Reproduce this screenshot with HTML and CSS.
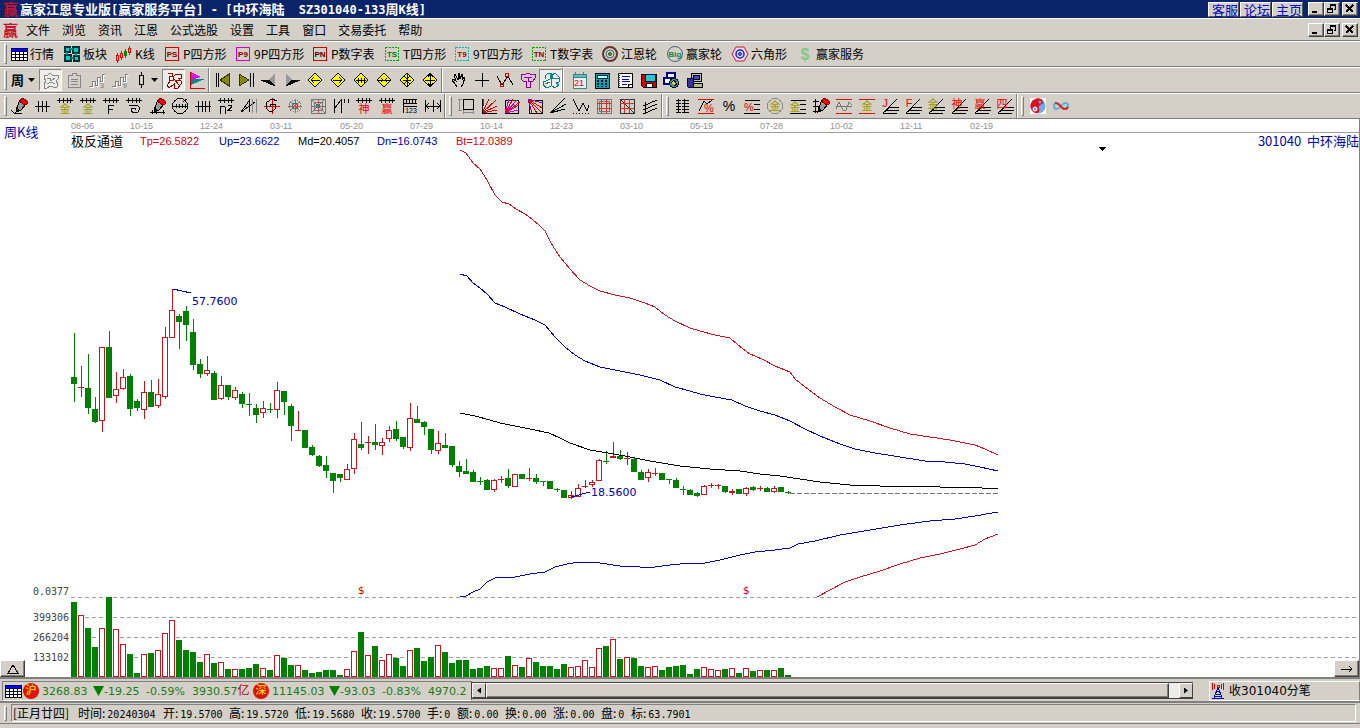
FILE: index.html
```html
<!DOCTYPE html>
<html lang="zh-CN">
<head>
<meta charset="utf-8">
<title>赢家江恩专业版</title>
<link rel="stylesheet" href="styles.css">
</head>
<body>
<svg class="defs" aria-hidden="true">
  <symbol id="comb" viewBox="0 0 18 18"><path d="M1 3.500h16M3.500 1v5M7.500 1v5M11.500 1v5M14.500 1v5"/></symbol>
  <symbol id="diamond" viewBox="0 0 18 18"><path d="M9 2l7 7-7 7-7-7z" fill="#ff0" stroke="#000"/></symbol>
  <symbol id="fan" viewBox="0 0 18 18"><path d="M2 16L16 2M2 16l7-6h9M2 16l4-3h12M2 16.500h14"/></symbol>
  <symbol id="pen" viewBox="0 0 18 18"><path d="M7 10l3-7 6 4-5 6-5 2z" fill="#999"/><path d="M11 2l2-1 4 3v3l-2 1-5-3z" fill="#e00" stroke="#800"/><path d="M8 10l-2 5 3-1" fill="#000"/></symbol>
  <symbol id="wave" viewBox="0 0 18 18"><path d="M1 15.500h3v-5h3v4h2v-8h3v4h2v-7h3" stroke="#fff" transform="translate(1 1)"/><path d="M1 15.500h3v-5h3v4h2v-8h3v4h2v-7h3" stroke="#808080"/></symbol>
  <symbol id="table" viewBox="0 0 18 18"><path d="M1 3h16v12H1z" fill="#fff" stroke="#000"/><path d="M1 3h16v3H1z" fill="#00f" stroke="#006"/><path d="M1 9h16M1 12h16M5 6v9M9 6v9M13 6v9" stroke="#000"/></symbol>
  <symbol id="restore" viewBox="0 0 12 12"><path d="M4 1h6v2H4zM1 5h6v2H1z" fill="#000" stroke="none"/><path d="M4.500 5V1.500h5v5H8M1.500 5.500h5v4h-5z"/></symbol>
</svg>

<header class="titlebar">
  <span class="logo">赢</span>
  <h1>赢家江恩专业版<span>[</span>赢家服务平台<span>] - [</span>中环海陆<span>  SZ301040-133</span>周<span>K</span>线<span>]</span></h1>
  <nav class="links"><a href="#">客服</a><a href="#">论坛</a><a href="#">主页</a></nav>
  <div class="winbtns">
    <button aria-label="最小化"><svg viewBox="0 0 12 12"><path d="M2 9h5" stroke-width="2"/></svg></button>
    <button aria-label="还原"><svg><use href="#restore"/></svg></button>
    <button class="close" aria-label="关闭"><svg viewBox="0 0 12 12"><path d="M2 2l7 7M9 2l-7 7" stroke-width="2"/></svg></button>
  </div>
</header>

<div class="menubar">
  <span class="logo">赢</span>
  <nav class="menu">
    <button>文件</button><button>浏览</button><button>资讯</button><button>江恩</button><button>公式选股</button><button>设置</button><button>工具</button><button>窗口</button><button>交易委托</button><button>帮助</button>
  </nav>
  <div class="winbtns">
    <button aria-label="最小化窗口"><svg viewBox="0 0 12 12"><path d="M2 9h5" stroke-width="2"/></svg></button>
    <button aria-label="还原窗口"><svg><use href="#restore"/></svg></button>
    <button class="close" aria-label="关闭窗口"><svg viewBox="0 0 12 12"><path d="M2 2l7 7M9 2l-7 7" stroke-width="2"/></svg></button>
  </div>
</div>

<div class="toolbar">
  <i class="grip"></i>
  <div class="features">
    <button><svg><use href="#table"/></svg>行情</button>
    <button><svg viewBox="0 0 18 18"><path d="M2 2h5v5H2zM10 2h6v6h-6zM2 10h6v6H2zM11 11h5v5h-5z" fill="#0cc" stroke="#033" stroke-width="2"/><path d="M7 4h3M4 7v3M13 8v3M8 13h3" stroke="#088" stroke-width="2"/></svg>板块</button>
    <button><svg viewBox="0 0 18 18"><path d="M2.500 8v10M6.500 6v9M14.500 1v9" stroke="#e00"/><path d="M1.500 10.500h2v5h-2zM5.500 8.500h2v4h-2zM13.500 3.500h2v4h-2z" fill="#fcc" stroke="#e00"/><path d="M10.500 4v9M9.500 6.500h2v4h-2z" fill="#080" stroke="#080"/></svg>K线</button>
    <button><svg viewBox="0 0 18 18"><path d="M2.500 2.500h13v13h-13z" stroke="#c00"/><text x="9" y="12" class="t8" fill="#800">PS</text></svg>P四方形</button>
    <button><svg viewBox="0 0 18 18"><path d="M2.500 2.500h13v13h-13z" stroke="#c0c"/><text x="9" y="12" class="t8" fill="#800">P9</text></svg>9P四方形</button>
    <button><svg viewBox="0 0 18 18"><path d="M2.500 2.500h13v13h-13z" stroke="#c00"/><text x="9" y="12" class="t8" fill="#400">PN</text></svg>P数字表</button>
    <button><svg viewBox="0 0 18 18"><path d="M2.500 2.500h13v13h-13z" stroke="#0a0" stroke-dasharray="2 1"/><text x="9" y="12" class="t8" fill="#070">TS</text></svg>T四方形</button>
    <button><svg viewBox="0 0 18 18"><path d="M2.500 2.500h13v13h-13z" stroke="#0bb" stroke-dasharray="2 1"/><text x="9" y="12" class="t8" fill="#a00">T9</text></svg>9T四方形</button>
    <button><svg viewBox="0 0 18 18"><path d="M2.500 2.500h13v13h-13z" stroke="#0a0" stroke-dasharray="2 1"/><text x="9" y="12" class="t8" fill="#800">TN</text></svg>T数字表</button>
    <button><svg viewBox="0 0 18 18" class="smooth"><circle cx="9" cy="9" r="7" stroke="#633" stroke-width="2"/><circle cx="9" cy="9" r="4" stroke="#466"/><circle cx="9" cy="9" r="1.500" fill="#4a4" stroke="#353"/></svg>江恩轮</button>
    <button><svg viewBox="0 0 18 18" class="smooth"><circle cx="9" cy="9" r="7.500" stroke="#376b78"/><text x="9" y="12" class="t8" fill="#188040">Big</text></svg>赢家轮</button>
    <button><svg viewBox="0 0 18 18" class="smooth"><path d="M5 2h8l4 7-4 7H5L1 9z" stroke="#c02030" fill="#ecd8ec"/><circle cx="9" cy="9" r="4" stroke="#22c" stroke-width="1.500"/><circle cx="9" cy="9" r="1.500" fill="#2a8" stroke="#22c"/></svg>六角形</button>
    <button><svg viewBox="0 0 18 18" class="smooth"><text x="9" y="15" class="t16" fill="#82c88a">$</text></svg>赢家服务</button>
  </div>
</div>

<div class="toolbar">
  <i class="grip"></i>
  <button class="period">周<i class="caret"></i></button>
  <div class="icons">
    <button class="on" aria-label="叠加"><svg viewBox="0 0 18 18"><path d="M2 4h4l2-2 2 2h6v4l-2 2 2 3-1 3h-4l-3-1-3 2H2v-4l2-3-2-3zM5 7h3l1 3 4-3M5 13l4-2 4 2" stroke="#888"/></svg></button>
    <button aria-label="剪贴板"><svg viewBox="0 0 18 18"><path d="M3 4h4V2h4v2h4v12H3zM6 8h7M6 10h7M6 13h7" stroke="#888"/></svg></button>
    <button aria-label="三浪"><svg viewBox="0 0 18 18"><use href="#wave"/><text x="14" y="17" class="t7" fill="#777">3</text></svg></button>
    <button aria-label="九浪"><svg viewBox="0 0 18 18"><use href="#wave"/><text x="14" y="17" class="t7" fill="#777">9</text></svg></button>
  </div>
  <button class="candle" aria-label="K线样式"><svg viewBox="0 0 18 18"><path d="M8.500 1v3M8.500 14v3M6.500 4.500h4v9h-4z" stroke="#000"/></svg><i class="caret"></i></button>
  <div class="icons">
    <button class="on" aria-label="形态"><svg viewBox="0 0 18 18"><path d="M3 2h4v3H4v4h4V6l3-3h5v4h-3l3 3v3l-3 4H9v-4l-5 4-2-3 4-5M9 8l5 6M10 9h5" stroke="#900"/></svg></button>
    <button aria-label="旗帜"><svg viewBox="0 0 18 18"><path d="M2 1v16h15" stroke="#c00"/><path d="M3 1l10 5-10 3z" fill="#e0e" stroke="none"/><path d="M3 8l14 0-14 6z" fill="#088" stroke="none"/></svg></button>
  </div>
  <i class="sep"></i>
  <div class="icons">
    <button aria-label="首个"><svg viewBox="0 0 18 18"><path d="M2 2v14M4.500 2v14" stroke="#000"/><path d="M15 3v12L6 9z" fill="#880" stroke="#330"/></svg></button>
    <button aria-label="末个"><svg viewBox="0 0 18 18"><path d="M16 2v14M13.500 2v14" stroke="#000"/><path d="M2 3v12l10-6z" fill="#880" stroke="#330"/></svg></button>
    <button aria-label="后退"><svg viewBox="0 0 18 18"><path d="M15 2v13l-6-6z" fill="#999" stroke="none"/><path d="M1 9h8l6 6z" fill="#000"/></svg></button>
    <button aria-label="前进"><svg viewBox="0 0 18 18"><path d="M3 2v13l6-6z" fill="#999" stroke="none"/><path d="M17 9H9l-6 6z" fill="#000"/></svg></button>
    <button aria-label="左移"><svg viewBox="0 0 18 18"><use href="#diamond"/><path d="M5 9.500h9M8 6L5 9l3 3"/></svg></button>
    <button aria-label="右移"><svg viewBox="0 0 18 18"><use href="#diamond"/><path d="M4 9.500h9M10 6l3 3-3 3"/></svg></button>
    <button aria-label="横向拉伸"><svg viewBox="0 0 18 18"><use href="#diamond"/><path d="M4 9.500h10M6 7v5M12 7v5M9 7v5"/></svg></button>
    <button aria-label="横向压缩"><svg viewBox="0 0 18 18"><use href="#diamond"/><path d="M3 9.500h12M6 7l2 2-2 2M12 7l-2 2 2 2"/></svg></button>
    <button aria-label="纵向压缩"><svg viewBox="0 0 18 18"><use href="#diamond"/><path d="M9.500 3v12M6 5l3 3 3-3M6 13l3-3 3 3M5 9h8"/></svg></button>
    <button aria-label="纵向拉伸"><svg viewBox="0 0 18 18"><use href="#diamond"/><path d="M9.500 3v12M4 9.500h10M7 6l2-3 3 3M7 12l2 3 3-3"/></svg></button>
  </div>
  <i class="sep"></i>
  <div class="icons tools">
    <button aria-label="拖动"><svg viewBox="0 0 18 18"><path d="M7 16l-2-3-3-4 1-1 3 2-2-7h1l3 6V2h1l1 6 2-5h1l-1 6 2-3h1l-2 7-2 3" fill="none"/></svg></button>
    <button aria-label="十字线"><svg viewBox="0 0 18 18"><path d="M9.500 2v14M2 9.500h14" stroke="#000"/></svg></button>
    <button aria-label="折线"><svg viewBox="0 0 18 18"><path d="M1 5l5 9 6-9 5 9" stroke="#000"/><circle cx="6" cy="14" r="2" stroke="#c00"/><circle cx="11" cy="4" r="2" stroke="#c00"/></svg></button>
    <button aria-label="标记"><svg viewBox="0 0 18 18"><path d="M2 3h5l2-1 2 1h5v4l-2 3h-3v6H7v-6H4L2 8zM5 6h8M9 6v4h3" stroke="#808" fill="#dcc4dc"/></svg></button>
    <button class="on" aria-label="分析"><svg viewBox="0 0 18 18"><path d="M3 8V5l3-3h2v6l-4 2H1v4l4 3 4-2V2M10 8V4l3-2 4 4v5l-3 1 3 2-4 3-3-2M3 13l5-2M11 7h6" stroke="#088"/></svg></button>
  </div>
  <i class="sep"></i>
  <div class="icons wide-start">
    <button aria-label="日历"><svg viewBox="0 0 18 18"><path d="M3 4h13v13H3z" fill="#eee" stroke="#388"/><path d="M3 3h13v3H3zM5 1v3M13 1v3" fill="#6bb" stroke="#388"/><text x="9" y="15" class="t9" fill="#d00">21</text></svg></button>
    <button aria-label="计算器"><svg viewBox="0 0 18 18"><path d="M2 2h14v15H2z" fill="#0aa" stroke="#002"/><path d="M4 4h10v3H4z" fill="#cff" stroke="#024"/><path d="M5 9v7M9 9v7M13 9v7" stroke="#003" stroke-width="2" stroke-dasharray="2 1"/></svg></button>
    <button aria-label="记事本"><svg viewBox="0 0 18 18"><path d="M2 2h14v14H2z" fill="#fff" stroke="#000"/><path d="M3 2v14" stroke="#444" stroke-width="2" stroke-dasharray="1 1"/><path d="M6 5h8M6 8h7M6 10h8M6 13h5" stroke="#00a"/><path d="M12 16v-3h4" fill="#aaa"/></svg></button>
    <button aria-label="保存"><svg viewBox="0 0 18 18"><path d="M2 3h15v13H4l-2-2z" fill="#c00" stroke="#000"/><path d="M6 3h10v7H6z" fill="#2cc" stroke="#006"/><path d="M7 12h6v4H7z" fill="#fff"/></svg></button>
    <button aria-label="网络"><svg viewBox="0 0 18 18"><path d="M5 2h8v5H5zM2 7h8v6H2z" fill="#fff" stroke="#008" stroke-width="1.500"/><circle cx="12" cy="12" r="4.500" fill="#399" stroke="#000"/><path d="M9 12l3-3 3 4-3 2" fill="#cc4"/></svg></button>
    <button aria-label="电脑"><svg viewBox="0 0 18 18"><path d="M6 2h10v8H6z" fill="#bbb" stroke="#000"/><path d="M8 4h6v4H8z" fill="#44b"/><path d="M8 12h9v4H8z" fill="#bb7" stroke="#000"/><path d="M2 7h6v9H3z" fill="#339" stroke="#003"/></svg></button>
  </div>
</div>

<div class="toolbar">
  <i class="grip"></i>
  <div class="icons draw">
    <button aria-label="画笔"><svg viewBox="0 0 18 18"><use href="#pen"/><path d="M1 13l4 4 7-1"/></svg></button>
    <button aria-label="刻度"><svg viewBox="0 0 18 18"><path d="M2 9.500h15M5.500 4v11M9.500 4v11M13.500 4v11"/></svg></button>
    <button aria-label="金尺一"><svg viewBox="0 0 18 18"><use href="#comb"/><text x="9" y="16" class="t11" fill="#990">金</text></svg></button>
    <button aria-label="金尺二"><svg viewBox="0 0 18 18"><use href="#comb"/><text x="9" y="16" class="t11" fill="#990">金</text></svg></button>
    <button aria-label="F尺"><svg viewBox="0 0 18 18"><use href="#comb"/><path d="M6.500 17V8.500H12M7 12.500h4"/></svg></button>
    <button aria-label="螺旋尺"><svg viewBox="0 0 18 18"><use href="#comb"/><path d="M4 8h8l3 3-2 4-4 1-3-2 1-3h3l1 2"/></svg></button>
    <button aria-label="笔尺"><svg viewBox="0 0 18 18"><use href="#pen"/><path d="M2 15h15M4 13v4M8 13v4M15 13v4"/></svg></button>
    <button aria-label="圆尺"><svg viewBox="0 0 18 18"><circle cx="9" cy="9" r="7.500"/><path d="M2 9h14M5 7v4M8 7v4M11 7v4M14 7v4M12 5L16 2"/></svg></button>
    <button aria-label="长刻度"><svg viewBox="0 0 18 18"><path d="M1 9.500h16M4.500 4v11M8.500 4v11M11.500 4v11M15.500 4v11"/></svg></button>
    <button aria-label="平方尺"><svg viewBox="0 0 18 18"><use href="#comb"/><path d="M3.500 17V9.500h4l1 1V17M11 8.500h3v2l-3 3h4"/></svg></button>
    <button aria-label="角度"><svg viewBox="0 0 18 18"><path d="M1 15L9 4v11M1 15l14-10"/><path d="M12.500 2v14M16.500 2v14" stroke="#888"/></svg></button>
    <button aria-label="旋转十字"><svg viewBox="0 0 18 18"><path d="M9.500 1v16M1 9.500h16" stroke="#d00"/><path d="M7 10l1-3h4l1 4-3 3H6l-3-3 1-6 5-3 5 2"/></svg></button>
    <button aria-label="星网"><svg viewBox="0 0 18 18"><path d="M9 2v14M2 9h14M4 4l10 10M14 4L4 14" stroke="#d44"/><circle cx="9" cy="9" r="6" stroke="#688" stroke-dasharray="1 1"/><circle cx="9" cy="9" r="3" stroke="#377"/></svg></button>
    <button aria-label="方网"><svg viewBox="0 0 18 18"><path d="M9 2v14M2 9h14" stroke="#d44"/><path d="M2 2h14v14H2zM5 5h8v8H5zM2 2l14 14M16 2L2 16" stroke="#777"/><circle cx="9" cy="9" r="2" stroke="#377"/></svg></button>
    <button aria-label="N形"><svg viewBox="0 0 18 18"><path d="M2.500 2v14M2 12L9 3v13M12.500 2v4M16.500 2v4"/></svg></button>
    <button aria-label="神尺"><svg viewBox="0 0 18 18"><use href="#comb"/><text x="9" y="16" class="t11" fill="#e00">神</text></svg></button>
    <button aria-label="赢尺"><svg viewBox="0 0 18 18"><use href="#comb"/><text x="9" y="16" class="t11" fill="#e00">赢</text></svg></button>
    <button aria-label="数尺"><svg viewBox="0 0 18 18"><path d="M2 16V2h14M2 6h14M2 9h14M5 2v4M8 2v4M11 2v4M14 2v4"/><text x="10" y="16" class="t7">123</text></svg></button>
    <button aria-label="宽度"><svg viewBox="0 0 18 18"><path d="M1.500 3v12M9.500 3v12M16.500 3v12M2 9.500h14M5 6L2 9l3 3M13 6l3 3-3 3"/></svg></button>
  </div>
  <i class="sep"></i><i class="grip second"></i>
  <div class="icons">
    <button aria-label="矩形"><svg viewBox="0 0 18 18"><path d="M6 2h10v10H6z"/><path d="M2 2v11M1 2h4M1 13h4M6 15h10M6 13v4M16 13v4" stroke="#888"/></svg></button>
    <button aria-label="扇形"><svg viewBox="0 0 18 18"><path d="M2 16L4 2M2 16L9 2M2 16L16 3M2 16l15-7M2 16l15-3" stroke="#d00"/><path d="M2 2v14h15"/></svg></button>
    <button aria-label="方扇形"><svg viewBox="0 0 18 18"><path d="M2 3h13v13H2z"/><path d="M2 16L6 2M2 16L14 3M2 16l14-8M2 16l14-3" stroke="#c0c"/><path d="M2 16L10 2M2 16L17 5" stroke="#d00"/></svg></button>
    <button aria-label="下扇形"><svg viewBox="0 0 18 18"><path d="M3 3h13v13H3z"/><path d="M2 2l14 14M2 2l14 9M2 2l9 14" stroke="#d00"/><path d="M2 2l15 4M2 2l4 14" stroke="#909"/></svg></button>
    <button aria-label="射线"><svg viewBox="0 0 18 18"><path d="M1 16L16 1M1 16l16-9M1 16l15-4"/></svg></button>
    <button aria-label="波段"><svg viewBox="0 0 18 18"><path d="M1 2l6 12 4-8 4 8 2-6"/><path d="M1 16h16" stroke-dasharray="1 2"/></svg></button>
    <button aria-label="网格"><svg viewBox="0 0 18 18"><path d="M2 2h14v14H2zM4 4h10v10H4z" stroke="#777"/><path d="M6 2v14M11 2v14M2 6h14M2 11h14" stroke="#c33"/></svg></button>
    <button aria-label="网格线"><svg viewBox="0 0 18 18"><path d="M2 2h14v14H2zM2 2l14 14" stroke="#333"/><path d="M6 2v14M11 2v14M2 6h14M2 11h14" stroke="#c33"/></svg></button>
    <button aria-label="平行线"><svg viewBox="0 0 18 18"><path d="M2 9l14-6M2 13l14-6M2 17l14-6M4 5v12"/></svg></button>
  </div>
  <i class="sep"></i><i class="grip second"></i>
  <div class="icons">
    <button aria-label="价格尺"><svg viewBox="0 0 18 18"><path d="M4 2v14M10 2v14M2 3h5M2 6h5M2 9h5M2 12h5M2 15h5M8 3h7M8 6h7M8 9h7M8 12h7M8 15h7"/></svg></button>
    <button aria-label="百分比区"><svg viewBox="0 0 18 18"><path d="M1 2h16M1 16h16" stroke="#d00"/><path d="M2 14L7 4l3 3 5-4"/><text x="12" y="15" class="t11" fill="#d00">%</text></svg></button>
    <button aria-label="百分比"><svg viewBox="0 0 18 18"><text x="9" y="14" class="t14">%</text></svg></button>
    <button aria-label="百分比线"><svg viewBox="0 0 18 18"><path d="M2 3h15M11 7h6M11 12h6M1 16h16"/><text x="6" y="14" class="t11" fill="#d00">%</text></svg></button>
    <button aria-label="金圆"><svg viewBox="0 0 18 18"><circle cx="9" cy="9" r="7.500" stroke="#888"/><text x="9" y="13" class="t11" fill="#990">金</text></svg></button>
    <button aria-label="金线"><svg viewBox="0 0 18 18"><path d="M2 3h15M11 7h6M11 12h6M1 16h16"/><text x="6" y="14" class="t11" fill="#990">金</text></svg></button>
    <button aria-label="标尺笔"><svg viewBox="0 0 18 18"><use href="#pen"/><path d="M3.500 2v14M1 4h6M1 9h6M1 14h6"/></svg></button>
    <button aria-label="波动带"><svg viewBox="0 0 18 18"><path d="M1 2h16M1 16h16" stroke="#d00"/><path d="M1 12l3-7 4 8h3l3-8 3 3M1 9h16" stroke="#777"/></svg></button>
    <button aria-label="金带"><svg viewBox="0 0 18 18"><path d="M1 2h16M1 16h16" stroke="#d00"/><text x="9" y="13" class="t11" fill="#990">金</text></svg></button>
    <button aria-label="J扇"><svg viewBox="0 0 18 18"><use href="#fan"/><text x="4" y="10" class="t11" fill="#e00">J</text></svg></button>
    <button aria-label="F扇"><svg viewBox="0 0 18 18"><use href="#fan"/><text x="5" y="10" class="t11" fill="#e00">F</text></svg></button>
    <button aria-label="金扇"><svg viewBox="0 0 18 18"><use href="#fan"/><text x="6" y="11" class="t11" fill="#990">金</text></svg></button>
    <button aria-label="神扇"><svg viewBox="0 0 18 18"><use href="#fan"/><text x="7" y="11" class="t11" fill="#e00">神</text></svg></button>
    <button aria-label="赢扇"><svg viewBox="0 0 18 18"><use href="#fan"/><text x="7" y="11" class="t11" fill="#e00">赢</text></svg></button>
    <button aria-label="四扇"><svg viewBox="0 0 18 18"><use href="#fan"/><text x="6" y="11" class="t11" fill="#e00">四</text></svg></button>
  </div>
  <i class="sep"></i><i class="grip second"></i>
  <div class="icons">
    <button aria-label="太极"><svg viewBox="0 0 18 18" class="smooth"><path d="M1 1h16v16H1z" fill="#fff" stroke="none"/><circle cx="9" cy="9" r="7.500" fill="#6aaaf0" stroke="none"/><path d="M12 2a7.500 7.500 0 1 0-6 14c4 1 5-3 4-5s1-3 3-4 1-4-1-5z" fill="#e01020" stroke="none"/><circle cx="11" cy="5" r="1.500" fill="#6aaaf0" stroke="none"/><circle cx="6" cy="12" r="2" fill="#6aaaf0" stroke="#fff"/></svg></button>
    <button aria-label="无穷"><svg viewBox="0 0 18 18" class="smooth"><path d="M9 9C6 5 2 5 2 9s4 4 7 0 7-4 7 0-4 4-7 0z" stroke="#5ab0d8" stroke-width="2"/><path d="M3 6c4-1 5 5 9 6 2 0 3 0 4-2" stroke="#d22" stroke-width="2"/></svg></button>
  </div>
</div>

<main class="chart">
  <div class="chart-head">
    <div class="period-name">周K线</div>
    <div class="chart-top">
      <div class="dates"><span>08-06</span><span>10-15</span><span>12-24</span><span>03-11</span><span>05-20</span><span>07-29</span><span>10-14</span><span>12-23</span><span>03-10</span><span>05-19</span><span>07-28</span><span>10-02</span><span>12-11</span><span>02-19</span></div>
      <div class="legend">
        <span class="name">极反通道</span><span class="red">Tp=26.5822</span><span class="blue">Up=23.6622</span><span>Md=20.4057</span><span class="blue">Dn=16.0743</span><span class="red">Bt=12.0389</span>
        <strong>301040&nbsp; 中环海陆</strong>
      </div>
    </div>
  </div>
  <svg class="price" id="price"></svg>
  <div class="volume">
    <svg id="volume"></svg>
    <button class="up-btn" aria-label="展开"><svg viewBox="0 0 12 12"><path d="M1 10l5-8 5 8z" stroke="#000"/></svg></button>
    <button class="next-btn" aria-label="向右"><svg viewBox="0 0 12 12"><path d="M0 6h11M8 3l3 3-3 3"/></svg></button>
  </div>
</main>

<div class="ticker">
  <div class="quotes">
    <svg class="table-icon"><use href="#table"/></svg>
    <b class="badge">沪</b><span class="q1">3268.83</span><i class="down"></i><span class="q2">-19.25</span><span class="q3">-0.59%</span><span class="q4">3930.57<em>亿</em></span>
    <b class="badge">深</b><span class="q5">11145.03</span><i class="down"></i><span class="q2">-93.03</span><span class="q3">-0.83%</span><span>4970.2</span>
  </div>
  <div class="scroll">
    <button aria-label="向左滚动"><i class="left"></i></button><div class="thumb"></div><div class="track"></div><button aria-label="向右滚动"><i class="right"></i></button>
  </div>
  <div class="feed"><svg viewBox="0 0 14 18"><path d="M7 5L3 16M7 5l4 11M4 12h6M5 9h4M1 16h12M3 14h8" stroke="#00a"/><path d="M4 2L3 4l1 3M2 1L1 4l1 4M10 2l1 2-1 3M12 1l1 3-1 4M6 3h2v2H6z" stroke="#d00"/></svg>收301040分笔</div>
</div>

<footer class="status">
  <i class="grip"></i>
  <div class="fields">
    <span>[正月廿四]</span><span>时间:<b>20240304</b></span><span>开:<b>19.5700</b></span><span>高:<b>19.5720</b></span><span>低:<b>19.5680</b></span><span>收:<b>19.5700</b></span><span>手:<b>0</b></span><span>额:<b>0.00</b></span><span>换:<b>0.00</b></span><span>涨:<b>0.00</b></span><span>盘:<b>0</b></span><span>标:<b>63.7901</b></span>
  </div>
</footer>
<script src="chart.js"></script>
</body>
</html>
```

FILE: styles.css
```css
* { box-sizing: border-box; }
body {
  margin: 0;
  height: 100vh;
  display: flex;
  flex-direction: column;
  overflow: hidden;
  background: #d4d0c8;
  color: #000;
  font: 12px/16px "Noto Sans CJK SC", sans-serif;
}
button { font: inherit; color: inherit; background: none; border: 0; padding: 0; margin: 0; white-space: nowrap; }
svg { fill: none; stroke: #000; shape-rendering: crispEdges; flex: none; }
svg text { stroke: none; text-anchor: middle; font-family: "Liberation Sans", "Noto Sans CJK SC", sans-serif; }
svg text:not([fill]) { fill: #000; }
.smooth { shape-rendering: auto; }
.defs { display: none; }
.t7 { font-size: 7px; }
.t8 { font-size: 8px; font-weight: bold; }
.t9 { font-size: 9px; }
.t11 { font-size: 11px; }
.t14 { font-size: 14px; }
.t16 { font-size: 16px; font-weight: bold; }

.titlebar { display: flex; align-items: center; height: 18px; background: #0a246a; color: #fff; padding: 0 2px 0 3px; flex: none; }
.titlebar h1 { font-size: 13px; line-height: 18px; font-weight: bold; margin: 0 auto 0 2px; white-space: pre; }
.titlebar h1 span { font: bold 12px/16px "DejaVu Sans Mono", monospace; }
.logo { color: #c8102e; font-size: 15px; line-height: 18px; font-weight: bold; }
.links { display: flex; gap: 1px; margin-right: 5px; }
.links a { width: 31px; height: 15px; line-height: 13px; padding-left: 3px; font-size: 13px; color: #00c; text-decoration: none; background: #d4d0c8; border: 1px solid; border-color: #fff #555 #555 #fff; display: flex; align-items: center; }
.winbtns { display: flex; }
.winbtns button, .up-btn, .next-btn, .scroll button { background: #d4d0c8; border: 1px solid; border-color: #fff #404040 #404040 #fff; display: flex; align-items: center; justify-content: center; }
.winbtns button { width: 16px; height: 14px; box-shadow: inset -1px -1px #808080; }
.winbtns .close { margin-left: 2px; }
.winbtns svg { width: 12px; height: 12px; }

.menubar { display: flex; align-items: center; height: 23px; flex: none; border-top: 1px solid #fff; border-bottom: 1px solid #808080; padding: 0 2px 0 3px; }
.menu { display: flex; gap: 12px; margin: 0 auto 0 8px; }

.toolbar { display: flex; align-items: center; height: 26px; flex: none; border-top: 1px solid #fff; border-bottom: 1px solid #808080; padding-left: 4px; }
.grip { width: 3px; height: 20px; border: 1px solid; border-color: #fff #808080 #808080 #fff; flex: none; }
.sep { width: 2px; height: 24px; border-left: 1px solid #808080; border-right: 1px solid #fff; flex: none; }
.features { display: grid; margin-left: 3px; grid-template-columns: 53px 52px 48px 71px 77px 72px 70px 77px 71px 65px 65px 65px auto; }
.features button { display: flex; align-items: center; gap: 2px; }
.features svg, .icons svg, .candle svg { width: 18px; height: 18px; }
.icons { display: flex; }
.icons button { width: 23px; height: 22px; display: flex; align-items: center; justify-content: center; }
.icons .on { border: 1px solid; border-color: #808080 #fff #fff #808080; background: #eeece8; }
.period { width: 32px; display: flex; align-items: center; gap: 4px; padding-left: 4px; font-size: 13px; font-weight: bold; }
.candle { width: 31px; display: flex; align-items: center; padding-left: 2px; }
.caret { width: 7px; height: 4px; background: #000; clip-path: polygon(0 0, 100% 0, 50% 100%); flex: none; }
.toolbar .sep + .icons { margin-left: 1px; }
.toolbar .sep + .tools { margin-left: 4px; }
.toolbar .sep + .wide-start { margin-left: 3px; }
.grip.second { margin: 0 1px 0 3px; }
.second + .icons { margin-left: 1px; }

.chart { flex: 1; min-height: 0; display: flex; flex-direction: column; background: #fff; border-right: 1px solid #808080; }
.chart-head { display: flex; height: 30px; flex: none; }
.period-name { width: 71px; padding: 5px 0 0 4px; font-size: 13px; color: #00a; }
.chart-top { flex: 1; }
.dates { display: flex; height: 14px; border-bottom: 1px solid #a0a0a0; font: 9px/15px "Liberation Sans", sans-serif; color: #909090; }
.dates span { width: 70px; }
.dates span:first-child { width: 59px; }
.legend { display: flex; font: 11px/16px "Liberation Sans", sans-serif; }
.legend span { width: 79px; }
.legend .name { width: 69px; }
.legend .name, .legend strong { font: 13px/16px "Noto Sans CJK SC", sans-serif; }
.legend strong { margin-left: auto; color: #00a; white-space: nowrap; }
.red { color: #d00010; }
.blue { color: #00a; }
.price { flex: 1; width: 100%; min-height: 0; overflow: visible; }
.volume { position: relative; height: 80px; flex: none; }
.volume > svg { display: block; width: 100%; height: 80px; }
.up-btn, .next-btn { position: absolute; bottom: 0; height: 17px; width: 25px; box-shadow: inset -1px -1px #808080; }
.up-btn { left: 0; }
.next-btn { right: 0; }
.up-btn svg, .next-btn svg { width: 12px; height: 12px; }
#price text, #volume text { font: 10px "DejaVu Sans Mono", monospace; fill: #444; text-anchor: end; }
#price .mark { font: 11px "DejaVu Sans", sans-serif; fill: #00a; text-anchor: start; }
#price .dollar { font: 11px "DejaVu Sans Mono", monospace; fill: #c00; text-anchor: middle; }
.up { stroke: #c8141e; fill: #fff; }
.dn { stroke: #008000; fill: #008000; }
.grid { stroke: #a0a0a0; stroke-dasharray: 4 3; }

.ticker { display: flex; height: 25px; flex: none; border-top: 2px solid #808080; padding-top: 2px; border-bottom: 1px solid #808080; font: 11px/19px "DejaVu Sans", "Noto Sans CJK SC", sans-serif; }
.quotes { width: 470px; flex: none; display: flex; align-items: center; border: 1px solid; border-color: #808080 #808080 #fff #808080; margin-left: 2px; padding-left: 1px; overflow: hidden; color: #1a7a1a; white-space: nowrap; }
.table-icon { width: 18px; height: 18px; margin-right: 1px; }
.badge { width: 16px; height: 16px; flex: none; border-radius: 8px; background: #e01000; color: #ff0; font-size: 11px; line-height: 15px; text-align: center; margin-right: 3px; font-weight: normal; }
.down { width: 11px; height: 10px; background: #008000; clip-path: polygon(0 0, 100% 0, 50% 100%); flex: none; }
.q1 { width: 51px; }
.q2 { width: 42px; }
.q3 { width: 46px; }
.q4 { width: 61px; }
.q5 { width: 57px; }
.quotes em { font-style: normal; font-size: 12px; color: #a00; }
.scroll { flex: 1; display: flex; border: 1px solid #404040; border-right: 0; height: 17px; margin-right: 16px; margin-top: 1px; margin-left: -1px; }
.scroll button { width: 14px; }
.thumb { flex: 1; border: 1px solid; border-color: #fff #404040 #404040 #fff; box-shadow: inset -1px -1px #808080; }
.track { width: 10px; background: #eeece8; }
.left, .right { width: 4px; height: 6px; background: #000; clip-path: polygon(100% 0, 100% 100%, 0 50%); }
.right { clip-path: polygon(0 0, 100% 50%, 0 100%); }
.feed { width: 151px; display: flex; align-items: center; gap: 4px; border: 1px solid; border-color: #fff #808080 #fff #fff; font-size: 12px; white-space: nowrap; }
.feed svg { width: 14px; height: 18px; margin-left: 1px; }

.status { display: flex; align-items: center; height: 22px; flex: none; border-top: 1px solid #808080; border-bottom: 1px solid #808080; padding: 1px 4px; margin-bottom: 4px; gap: 4px; }
.status .grip { height: 15px; }
.fields { flex: 1; height: 18px; display: grid; grid-template-columns: 65px 85px 66px 66px 66px 66px 30px 48px 48px 48px 30px auto; border: 1px solid; border-color: #808080 #fff #fff #808080; padding-left: 1px; white-space: nowrap; }
.fields b { font: 10px "DejaVu Sans Mono", monospace; margin-left: 2px; }
```

FILE: chart.js
```js
// Weekly bars: [rising, high, bodyTop, bodyBottom, low, volumeTop]
const bars = [
[0,333,377,383,401,602],[1,366,387,387,396,615],[0,354,388,407,413,628],[0,397,409,421,422,647],[1,347,347,420,431,628],
[0,331,347,397,397,597],[1,372,389,395,402,629],[1,369,377,388,389,644],[0,374,376,408,415,654],[0,399,401,407,410,673],
[1,381,392,409,418,654],[0,380,392,406,406,653],[1,379,394,405,407,650],[1,327,337,396,398,633],[1,289,310,337,337,620],
[0,314,316,321,348,640],[0,306,311,324,340,650],[0,319,332,364,369,652],[0,359,364,373,377,662],[1,356,370,373,375,654],
[0,371,373,399,399,663],[1,376,385,398,399,662],[0,385,385,396,399,669],[1,387,390,397,399,669],[0,392,394,403,407,669],
[0,393,404,404,415,668],[0,404,408,414,422,664],[1,401,408,412,417,668],[0,403,409,409,412,670],[1,382,390,409,417,655],
[0,391,391,401,414,658],[0,404,406,425,440,665],[1,411,430,430,430,665],[0,430,430,447,447,670],[0,445,447,454,455,673],
[0,455,456,465,466,672],[0,456,465,470,477,670],[0,473,473,480,492,670],[0,474,474,477,481,675],[1,464,469,479,479,669],
[1,433,439,468,473,651],[0,422,444,447,449,632],[1,436,442,442,453,655],[0,424,442,444,449,646],[1,438,442,445,454,660],
[1,426,430,438,441,654],[0,421,429,438,440,658],[0,437,437,446,448,666],[1,403,418,447,450,650],[0,406,419,422,422,648],
[0,421,422,426,434,661],[0,429,429,449,453,657],[1,431,443,450,453,645],[0,433,445,447,447,652],[0,446,446,464,466,663],
[0,461,466,471,476,660],[0,459,471,473,473,660],[0,470,472,481,481,669],[0,477,481,481,484,668],[0,479,480,489,489,666],
[1,479,480,489,491,668],[1,476,479,479,482,668],[0,469,478,485,487,656],[1,474,474,486,486,665],[0,474,474,478,478,667],
[1,468,478,478,480,658],[0,474,478,481,483,662],[0,481,481,481,485,666],[0,481,481,488,488,666],[0,488,489,489,491,669],
[0,490,490,497,497,664],[1,491,495,497,498,667],[1,484,488,496,496,666],[1,480,486,486,487,660],[1,480,482,484,486,667],
[1,459,460,480,480,648],[0,451,461,461,463,646],[1,442,456,457,457,639],[0,450,456,458,459,659],[1,452,458,458,464,657],
[0,457,459,471,471,658],[0,470,472,479,479,666],[1,469,472,477,481,667],[1,468,473,473,475,666],[0,473,473,479,479,670],
[0,479,479,479,483,667],[0,478,480,487,487,666],[0,486,489,489,494,665],[0,489,490,494,494,674],[0,492,493,495,496,669],
[1,485,486,494,494,667],[1,483,485,485,487,669],[1,484,485,485,488,670],[0,486,486,491,492,669],[1,489,491,492,494,668],
[0,489,489,493,493,673],[1,487,488,493,495,668],[0,486,487,489,490,671],[1,486,488,488,490,670],[0,487,488,491,491,670],
[1,486,488,491,492,670],[0,487,487,491,491,668],[0,491,492,492,493,675]
];
const curves = [
["#c8141e","460,150 466,153 473,163 480,169 487,180 495,195 502,202 509,204 516,209 525,214 532,219 540,226 545,231 551,243 560,257 570,269 580,280 590,286 600,291 615,295 630,298 645,303 655,307 665,315 675,321 690,328 700,331 715,335 730,338 738,345 750,354 762,359 775,366 790,372 795,379 805,387 820,398 835,407 850,415 870,421 890,428 910,434 930,437 950,440 975,445 985,449 998,455"],
["#00a","460,274 467,276 473,283 480,288 487,294 495,303 505,307 520,314 535,320 545,325 555,337 565,347 575,355 585,361 600,367 620,371 640,375 660,380 675,387 690,391 700,394 715,397 732,400 745,406 760,411 775,415 790,421 805,429 820,436 840,444 855,449 875,453 900,457 925,461 945,462 965,464 980,467 998,471"],
["#000","460,413 475,416 490,420 500,423 515,426 530,429 549,433 560,438 570,443 590,450 608,453 625,456 650,461 680,466 710,469 740,471 760,474 780,476 800,479 820,482 850,485 880,486 910,486 940,487 965,487 998,489"],
["#00a","460,596 466,596 473,592 480,589 487,582 495,578 503,577 515,577 530,574 545,572 555,567 567,564 580,562 600,563 620,566 640,567 655,567 670,565 690,563 705,563 720,560 740,555 755,552 775,550 790,548 798,544 815,541 840,535 870,530 900,525 930,521 955,519 975,516 998,512"],
["#c8141e","817,597 830,590 845,582 860,577 880,571 900,564 920,558 940,554 960,549 975,545 985,539 998,534"],
["#00a","173,289 191,293"],
["#00a","571,497 590,492"]
];
const PRICE_TOP = 149, VOLUME_TOP = 597, VOLUME_BOTTOM = 677;
let price = "", volume = "";
bars.forEach(([rising, high, top, bottom, low, vol], i) => {
  const x = 74 + 7 * i, cls = rising ? "up" : "dn";
  price += `<path class="${cls}" d="M${x + .5} ${high}V${low + 1}"/>`;
  price += bottom > top
    ? `<rect class="${cls}" x="${x - 2.5}" y="${top + .5}" width="5" height="${bottom - top}"/>`
    : `<path class="${cls}" d="M${x - 3} ${top + .5}h6"/>`;
  volume += `<rect class="${cls}" x="${x - 2.5}" y="${vol + .5}" width="5" height="${VOLUME_BOTTOM - vol - 1}"/>`;
});
curves.forEach(([color, points]) => { price += `<polyline points="${points}" stroke="${color}"/>`; });
price += `<path d="M790 493.5H1000" stroke="#777" stroke-dasharray="5 2"/>
<path d="M1099 147h7v1h-1v1h-1v1h-1v1h-1v-1h-1v-1h-1v-1h-1z" fill="#000" stroke="none"/>
<text class="mark" x="192" y="305">57.7600</text><text class="mark" x="591" y="496">18.5600</text>
<text class="dollar" x="361" y="594">$</text><text class="dollar" x="746" y="594">$</text>
<text x="69" y="595">0.0377</text>`;
let grid = "";
[[597, ""], [617, "399306"], [637, "266204"], [657, "133102"]].forEach(([y, label]) => {
  grid += `<line class="grid" x1="71" x2="100%" y1="${y + .5}" y2="${y + .5}"/>`;
  grid += `<text x="69" y="${y + 4}">${label}</text>`;
});
document.getElementById("price").innerHTML = `<g transform="translate(0 ${-PRICE_TOP})">${price}</g>`;
document.getElementById("volume").innerHTML = `<g transform="translate(0 ${-VOLUME_TOP})">${grid}${volume}</g>`;
```
